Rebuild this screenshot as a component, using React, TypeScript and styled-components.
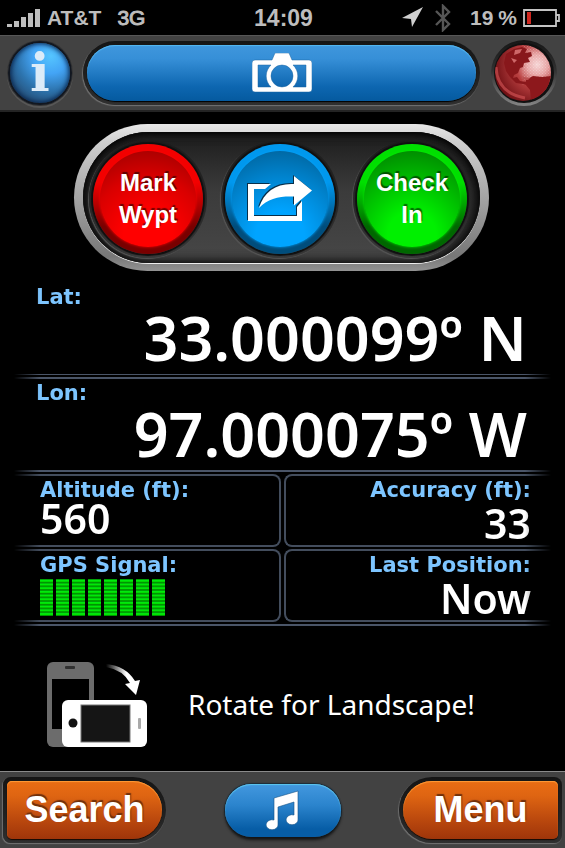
import React from "react";
import styled, { createGlobalStyle } from "styled-components";

const GlobalStyle = createGlobalStyle`
  * { box-sizing: border-box; }
  body { margin: 0; background: #000; font-family: "Liberation Sans", Arial, sans-serif; }
  button { font: inherit; margin: 0; border: 0; cursor: pointer; }
  svg { display: block; flex: none; }
`;

const Screen = styled.div`
  display: flex;
  flex-direction: column;
  min-height: 100vh;
  background: #000;
  color: #fff;
`;

/* ---------- status bar ---------- */

const StatusBar = styled.header`
  display: grid;
  grid-template-columns: 1fr auto 1fr;
  align-items: center;
  height: 35px;
  padding: 0 5px 0 7px;
  color: #bdbdbd;
  font-size: 21px;
  font-weight: 700;
  line-height: 24px;
`;

const StatusGroup = styled.div<{ $end?: boolean }>`
  display: flex;
  align-items: center;
  justify-content: ${(p) => (p.$end ? "flex-end" : "flex-start")};
`;

const Carrier = styled.span`
  margin: 0 16px 0 6px;
`;

const Network = styled.span`
  font-weight: 400;
  -webkit-text-stroke: 1px #bdbdbd;
`;

const Clock = styled.time`
  font-size: 23px;
`;

const StatusItem = styled.span`
  display: flex;
  gap: 5px;
  margin: 0 6px 0 12px;
`;

/* ---------- top and bottom bars ---------- */

const TopBar = styled.nav`
  display: flex;
  align-items: center;
  gap: 11px;
  height: 77px;
  padding: 0 8px;
  background: #424242;
  border-top: 1px solid #575757;
  border-bottom: 2px solid #242424;
`;

const BottomBar = styled.nav`
  display: flex;
  align-items: center;
  justify-content: space-between;
  height: 77px;
  padding: 0 3px;
  background: #424242;
  border-top: 1px solid #8a8a8a;
`;

const InfoButton = styled.button`
  flex: none;
  width: 64px;
  height: 64px;
  padding: 0;
  border-radius: 50%;
  border: 2px solid #121720;
  background: radial-gradient(circle at 68% 22%, #55c5ff 0%, #43a4f5 28%, #2d74ae 55%, #24486d 85%);
  box-shadow: 0 0 0 1px #333, 0 2px 0 1px #575757, inset 0 0 5px 1px #07234c;
  color: #dcebf8;
  font-family: "DejaVu Serif", serif;
  font-size: 52px;
  font-weight: 700;
  line-height: 56px;
`;

const Socket = styled.div<{ $shape: string; $grow?: boolean }>`
  display: flex;
  flex: ${(p) => (p.$grow ? "1" : "none")};
  padding: 4px;
  border-radius: ${(p) => p.$shape};
  background: linear-gradient(#151515, #202020 55%, #303030);
  box-shadow: -1px 1px 1px #707070, 0 1px 1px #555;
`;

const CameraButton = styled.button`
  display: flex;
  flex: 1;
  align-items: center;
  justify-content: center;
  height: 56px;
  border-radius: 28px;
  background: linear-gradient(#3f97dd 0%, #368fd7 25%, #0d66b0 75%, #055a9f 100%);
  box-shadow: inset 0 1px 1px #55b9f2, 0 1px 1px #000;
`;

const GlobeButton = styled.button`
  flex: none;
  width: 66px;
  height: 66px;
  padding: 3px;
  border-radius: 50%;
  background: linear-gradient(#161616, #303030 45%, #858585);
`;

const OrangeButton = styled.button<{ $shape: string }>`
  width: 155px;
  height: 58px;
  padding: 0;
  border-radius: ${(p) => p.$shape};
  background: linear-gradient(#e96d14 0%, #df6512 25%, #b6450d 72%, #9f350a 100%);
  box-shadow: inset 0 1px 1px #ff9c38, 0 1px 1px #180800;
  color: #fff;
  font-size: 36px;
  font-weight: 700;
  line-height: 56px;
  text-shadow: 1px -2px 1px #70300c;
`;

const MusicButton = styled.button`
  display: flex;
  align-items: center;
  justify-content: center;
  width: 116px;
  height: 53px;
  padding: 0;
  border-radius: 27px;
  background: linear-gradient(#4398df, #2b84cd 40%, #075da6 85%);
  box-shadow: inset 0 1px 1px #5cc7f0, 0 3px 3px #151515, 0 0 1px 1px #1b2c3a;
`;

/* ---------- action pod ---------- */

const PodFrame = styled.section`
  align-self: center;
  margin: 12px 2px 0 0;
  padding: 8px 9px;
  border-radius: 74px;
  background: linear-gradient(#e8e8e8, #cfcfcf 12%, #aaa 45%, #777 90%, #929292);
`;

const Pod = styled.div`
  display: flex;
  align-items: center;
  gap: 14px;
  height: 131px;
  padding: 3px 9px 0 6px;
  border-radius: 66px;
  background: linear-gradient(#1c1c1c, #3b3b3b 45%, #474747);
  box-shadow: inset 0 2px 4px #050505, inset 8px 0 12px #111, inset -8px 0 12px #111, 0 1px 0 #eee;
`;

const Ring = styled.div`
  padding: 4px;
  border-radius: 50%;
  background: linear-gradient(#1d1d1d, #2a2a2a 60%, #3a3a3a);
  box-shadow: -1px 1px 1px #555;
`;

const RoundButton = styled.button<{ $rim: string; $dark: string; $mid: string; $lit: string; $edge: string }>`
  display: flex;
  align-items: center;
  justify-content: center;
  width: 110px;
  height: 110px;
  padding: 7px;
  border-radius: 50%;
  background: linear-gradient(${(p) => p.$rim} 0%, ${(p) => p.$rim} 35%, ${(p) => p.$edge} 75%);
  box-shadow: 0 0 1px 2px #101010;
  color: #fff;
  font-size: 24px;
  font-weight: 700;
  line-height: 32px;
  text-shadow: 1px -2px 1px rgba(0, 0, 0, 0.55);

  > span {
    display: flex;
    align-items: center;
    justify-content: center;
    width: 96px;
    height: 96px;
    border-radius: 50%;
    background: radial-gradient(circle at 50% 88%, ${(p) => p.$lit} 25%, ${(p) => p.$mid} 60%, ${(p) => p.$dark} 100%);
    box-shadow: 0 0 3px ${(p) => p.$lit};
  }
`;

/* ---------- readouts ---------- */

const Readouts = styled.main`
  margin: 12px 14px 0;
  mask-image: linear-gradient(90deg, transparent, #000 26px, #000 calc(100% - 26px), transparent);
`;

const Coordinate = styled.section`
  display: flex;
  flex-direction: column;
  padding: 0 24px 9px 22px;
`;

const Label = styled.h2`
  margin: 0;
  color: #7dc5ff;
  font-family: "DejaVu Sans", Verdana, sans-serif;
  font-size: 21px;
  font-weight: 700;
  line-height: 28px;
  white-space: nowrap;
`;

const LargeValue = styled.output`
  font-family: "Noto Sans", "Open Sans", sans-serif;
  font-size: 61px;
  font-weight: 600;
  line-height: 54px;
  text-align: right;
  white-space: nowrap;
`;

const Rule = styled.div`
  height: 5px;
  border-top: 1px solid #4a5568;
  border-bottom: 2px solid #4a5568;
`;

const Cells = styled.section`
  display: grid;
  grid-template-columns: 1fr 1fr;
  gap: 2px 3px;
  padding: 2px 0;
  border-top: 2px solid #4a5568;
  border-bottom: 2px solid #4a5568;
`;

const Cell = styled.div<{ $side: "left" | "right" }>`
  display: flex;
  flex-direction: column;
  height: 73px;
  padding: 0 20px 0 26px;
  border: 2px solid #434d5d;
  text-align: ${(p) => p.$side};
  ${(p) =>
    p.$side === "left"
      ? "border-left: 0; border-radius: 0 8px 8px 0;"
      : "border-right: 0; border-radius: 8px 0 0 8px;"}
`;

const SmallValue = styled.output<{ $tight?: boolean }>`
  font-family: "Noto Sans", "Open Sans", sans-serif;
  font-size: 41px;
  font-weight: 600;
  line-height: ${(p) => (p.$tight ? "28px" : "38px")};
  white-space: nowrap;
`;

const Signal = styled.div`
  display: flex;
  gap: 3px;
`;

const SignalBar = styled.span`
  width: 13px;
  height: 37px;
  background: linear-gradient(#007a00, #00ff12 45%, #00f000 60%, #006500) 0 0 / 100% 10%;
`;

/* ---------- rotation hint ---------- */

const Hint = styled.section`
  display: flex;
  flex: 1;
  align-items: center;
  gap: 41px;
  padding: 10px 47px 0;
`;

const HintText = styled.p`
  margin: 0;
  font-family: "Noto Sans", sans-serif;
  font-size: 28px;
  line-height: 36px;
  white-space: nowrap;
`;

/* ---------- icons ---------- */

const SignalIcon = () => (
  <svg width="34" height="18" viewBox="0 0 34 18" fill="#bdbdbd" aria-hidden="true">
    <path d="M0 15h5v3H0zM7 12h5v6H7zM14 8h5v10h-5zM21 4h5v14h-5zM28 0h5v18h-5z" />
  </svg>
);

const LocationIcon = () => (
  <svg width="21" height="21" viewBox="0 0 21 21" aria-hidden="true">
    <path d="M21 0 0 11l9 1 1 8z" fill="#cfcfcf" />
  </svg>
);

const BluetoothIcon = () => (
  <svg width="17" height="28" viewBox="0 0 17 28" aria-hidden="true">
    <path d="m1 7 13 13-6 6V2l6 6L1 21" fill="none" stroke="#565656" strokeWidth="2.4" />
  </svg>
);

const BatteryIcon = () => (
  <svg width="37" height="18" viewBox="0 0 37 18" aria-hidden="true">
    <path d="M1 1h32v16H1zM33 6h3v6h-3" fill="none" stroke="#c4c4c4" strokeWidth="1.8" />
    <path d="M4 3h4v12H4z" fill="#d0271f" />
  </svg>
);

const CameraIcon = () => (
  <svg width="60" height="40" viewBox="0 0 60 40" aria-hidden="true">
    <path
      d="M3 7h17l3-7h14l3 7h17q3 0 3 3v26q0 3-3 3H3q-3 0-3-3V10q0-3 3-3zm3 5v22h13a15 15 0 0 1 0-22zm35 0a15 15 0 0 1 0 22h13V12zM30 12a11 11 0 1 0 0 22 11 11 0 0 0 0-22z"
      fill="#fff"
      fillRule="evenodd"
      stroke="#1e66a3"
      strokeWidth=".5"
    />
  </svg>
);

const GlobeIcon = () => (
  <svg width="60" height="60" viewBox="0 0 60 60" aria-hidden="true">
    <defs>
      <radialGradient id="sea" cx="72%" cy="36%" r="72%">
        <stop offset="0" stopColor="#f6d6d6" />
        <stop offset=".24" stopColor="#e8a5a5" />
        <stop offset=".5" stopColor="#b93f40" />
        <stop offset="1" stopColor="#701014" />
      </radialGradient>
      <pattern id="dots" width="3" height="3" patternUnits="userSpaceOnUse">
        <path d="M0 0h1v1H0zM1.5 1.5h1v1h-1z" fill="#fff" opacity=".25" />
      </pattern>
      <clipPath id="disc"><circle cx="29" cy="30" r="28" /></clipPath>
    </defs>
    <circle cx="30" cy="30" r="30" fill="#111" />
    <g clipPath="url(#disc)">
      <path d="M0 0h60v60H0z" fill="url(#sea)" />
      <path d="M28 0h32v42H28z" fill="url(#dots)" />
      <path d="m12 11 8-5 8-2 5 2-2 4 6-1 1 4-4 2 2 4-6 1-1 4-3 1-2 5-4 2-1 3 4-1 3 4 6 1 2 3-5-1-7-1-6-6-4-6-2-8z" fill="#88171b" />
      <path d="m21 7 7-1-2 4-6 2zM17 15l6 2-3 3z" fill="#ce6869" />
      <path d="m32 37 7-4 9 1 9-1-3 12-8 9-9 3-1-10-5-6z" fill="#8d181c" />
      <path d="m41 3 6 3-3 1zM29 34l7 1-2 2-7-1z" fill="#bb5051" />
      <path d="M2 24q1 26 29 31" fill="none" stroke="#d8595a" strokeWidth="3" opacity=".6" />
    </g>
  </svg>
);

const ShareIcon = () => (
  <svg width="64" height="46" viewBox="0 0 64 46" overflow="visible" aria-hidden="true">
    <g fill="#082f49" transform="translate(-1 -1)">
      <path d="M0 8h23l-6 5H6v27h43v-9l5-6v20H0z" />
      <path d="M11 32C16 15 29 7 46 8V0l18 14.500-18 15v-9C32 20 20 22 11 32z" />
    </g>
    <path d="M0 8h23l-6 5H6v27h43v-9l5-6v20H0z" fill="#fff" />
    <path d="M11 32C16 15 29 7 46 8V0l18 14.500-18 15v-9C32 20 20 22 11 32z" fill="#fff" />
  </svg>
);

const MusicIcon = () => (
  <svg width="34" height="40" viewBox="0 0 34 40" aria-hidden="true">
    <g fill="#fff" stroke="#155386" strokeWidth=".6">
      <path d="M8 8 32 1v28a6 5 0 1 1-4-4V12L12 17v17a6 5 0 1 1-4-4z" />
    </g>
  </svg>
);

const RotateIcon = () => (
  <svg width="100" height="86" viewBox="0 0 100 86" role="img" aria-label="Turn the phone sideways">
    <defs>
      <linearGradient id="sweep">
        <stop offset="0" stopColor="#fff" stopOpacity="0" />
        <stop offset=".6" stopColor="#fff" />
      </linearGradient>
    </defs>
    <rect y="1" width="47" height="85" rx="6" fill="#6c6c6c" />
    <rect x="5" y="18" width="37" height="50" fill="#000" />
    <rect x="18" y="5" width="10" height="3" rx="1" fill="#303030" />
    <rect x="15" y="39" width="85" height="47" rx="6" fill="#fff" />
    <rect x="34" y="44" width="49" height="37" fill="#151515" stroke="#777" />
    <circle cx="26" cy="62" r="4.500" fill="#111" />
    <rect x="91" y="57" width="3" height="11" rx="1" fill="#aaa" />
    <path d="M59 3q20 2 29 17l5-1-4 15-11-11 5-1Q76 9 59 6z" fill="url(#sweep)" />
  </svg>
);

/* ---------- screen ---------- */

const signalBars = [1, 2, 3, 4, 5, 6, 7, 8];

export default function App() {
  return (
    <Screen>
      <GlobalStyle />
      <StatusBar>
        <StatusGroup>
          <SignalIcon />
          <Carrier>AT&amp;T</Carrier>
          <Network>3G</Network>
        </StatusGroup>
        <Clock>14:09</Clock>
        <StatusGroup $end>
          <LocationIcon />
          <StatusItem><BluetoothIcon /></StatusItem>
          <StatusItem><span>19</span><span>%</span></StatusItem>
          <BatteryIcon />
        </StatusGroup>
      </StatusBar>

      <TopBar>
        <InfoButton aria-label="Information">i</InfoButton>
        <Socket $shape="32px" $grow>
          <CameraButton aria-label="Camera"><CameraIcon /></CameraButton>
        </Socket>
        <GlobeButton aria-label="Map"><GlobeIcon /></GlobeButton>
      </TopBar>

      <PodFrame>
        <Pod>
          <Ring>
            <RoundButton $rim="#f30000" $dark="#970000" $mid="#d90000" $lit="#ff0000" $edge="#790000">
              <span>Mark<br />Wypt</span>
            </RoundButton>
          </Ring>
          <Ring>
            <RoundButton aria-label="Share" $rim="#0098ee" $dark="#005c91" $mid="#0084cf" $lit="#00a4ff" $edge="#004d7c">
              <span><ShareIcon /></span>
            </RoundButton>
          </Ring>
          <Ring>
            <RoundButton $rim="#00df00" $dark="#007900" $mid="#00b900" $lit="#00f000" $edge="#006700">
              <span>Check<br />In</span>
            </RoundButton>
          </Ring>
        </Pod>
      </PodFrame>

      <Readouts>
        <Coordinate>
          <Label>Lat:</Label>
          <LargeValue>33.000099º N</LargeValue>
        </Coordinate>
        <Rule />
        <Coordinate>
          <Label>Lon:</Label>
          <LargeValue>97.000075º W</LargeValue>
        </Coordinate>
        <Cells>
          <Cell $side="left">
            <Label>Altitude (ft):</Label>
            <SmallValue $tight>560</SmallValue>
          </Cell>
          <Cell $side="right">
            <Label>Accuracy (ft):</Label>
            <SmallValue>33</SmallValue>
          </Cell>
          <Cell $side="left">
            <Label>GPS Signal:</Label>
            <Signal role="img" aria-label="Full signal">
              {signalBars.map((bar) => <SignalBar key={bar} />)}
            </Signal>
          </Cell>
          <Cell $side="right">
            <Label>Last Position:</Label>
            <SmallValue>Now</SmallValue>
          </Cell>
        </Cells>
      </Readouts>

      <Hint>
        <RotateIcon />
        <HintText>Rotate for Landscape!</HintText>
      </Hint>

      <BottomBar>
        <Socket $shape="8px 34px 34px 8px">
          <OrangeButton $shape="5px 30px 30px 5px">Search</OrangeButton>
        </Socket>
        <MusicButton aria-label="Music"><MusicIcon /></MusicButton>
        <Socket $shape="34px 8px 8px 34px">
          <OrangeButton $shape="30px 5px 5px 30px">Menu</OrangeButton>
        </Socket>
      </BottomBar>
    </Screen>
  );
}
